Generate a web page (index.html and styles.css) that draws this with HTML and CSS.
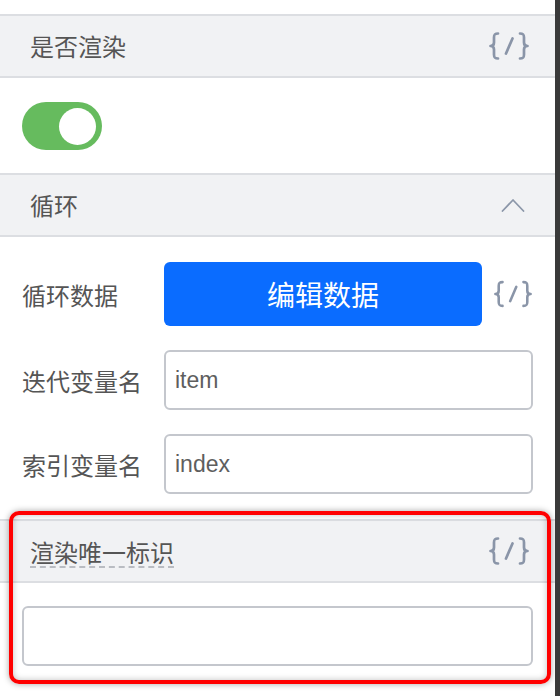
FILE: index.html
```html
<!DOCTYPE html>
<html lang="zh">
<head>
<meta charset="utf-8">
<link rel="stylesheet" href="styles.css">
</head>
<body>
<div class="panel">
  <div class="top-gap"></div>

  <div class="section-head">
    <span class="head-title">是否渲染</span>
    <svg class="code-icon" viewBox="0 0 42 30" width="42" height="30"><path d="M10 2.5C6.5 2.5 6 3.5 6 6.5V11.5C6 13.8 5 15 2.5 15C5 15 6 16.2 6 18.5V23.5C6 26.5 6.5 27.5 10 27.5"/><path d="M24.5 7.5L18 22.5"/><path d="M32 2.5C35.5 2.5 36 3.5 36 6.5V11.5C36 13.8 37 15 39.5 15C37 15 36 16.2 36 18.5V23.5C36 26.5 35.5 27.5 32 27.5"/></svg>
  </div>
  <div class="toggle-body">
    <div class="toggle"><div class="knob"></div></div>
  </div>

  <div class="section-head">
    <span class="head-title">循环</span>
    <svg class="chevron" viewBox="0 0 24 16" width="24" height="16"><path d="M1.5 14L12 3L22.5 14"/></svg>
  </div>
  <div class="fields">
    <div class="field">
      <span class="label">循环数据</span>
      <div class="control with-icon">
        <button class="edit-btn">编辑数据</button>
        <svg class="code-icon" viewBox="0 0 42 30" width="40" height="30"><path d="M10 2.5C6.5 2.5 6 3.5 6 6.5V11.5C6 13.8 5 15 2.5 15C5 15 6 16.2 6 18.5V23.5C6 26.5 6.5 27.5 10 27.5"/><path d="M24.5 7.5L18 22.5"/><path d="M32 2.5C35.5 2.5 36 3.5 36 6.5V11.5C36 13.8 37 15 39.5 15C37 15 36 16.2 36 18.5V23.5C36 26.5 35.5 27.5 32 27.5"/></svg>
      </div>
    </div>
    <div class="field">
      <span class="label">迭代变量名</span>
      <div class="control"><div class="input">item</div></div>
    </div>
    <div class="field">
      <span class="label">索引变量名</span>
      <div class="control"><div class="input">index</div></div>
    </div>
  </div>

  <div class="highlight-wrap">
    <div class="section-head">
      <span class="head-title dashed">渲染唯一标识</span>
      <svg class="code-icon" viewBox="0 0 42 30" width="42" height="30"><path d="M10 2.5C6.5 2.5 6 3.5 6 6.5V11.5C6 13.8 5 15 2.5 15C5 15 6 16.2 6 18.5V23.5C6 26.5 6.5 27.5 10 27.5"/><path d="M24.5 7.5L18 22.5"/><path d="M32 2.5C35.5 2.5 36 3.5 36 6.5V11.5C36 13.8 37 15 39.5 15C37 15 36 16.2 36 18.5V23.5C36 26.5 35.5 27.5 32 27.5"/></svg>
    </div>
    <div class="key-body">
      <div class="input empty"></div>
    </div>
    <div class="highlight"></div>
  </div>
</div>
</body>
</html>
```

FILE: styles.css
```css
html, body {
  margin: 0;
  padding: 0;
  background: #ffffff;
}

body {
  font-family: "Liberation Sans", "Noto Sans CJK SC", sans-serif;
  color: #555555;
}

.panel {
  width: 555px;
  height: 696px;
  border-right: 5px solid #3a3a3a;
  background: #ffffff;
  overflow: hidden;
}

.top-gap {
  height: 14px;
}

.section-head {
  height: 60px;
  box-sizing: content-box;
  border-top: 2px solid #dcdee2;
  border-bottom: 2px solid #dcdee2;
  background: #f1f2f4;
  display: flex;
  align-items: center;
  justify-content: space-between;
  padding: 0 25px 0 30px;
}

.head-title {
  font-size: 24px;
  color: #555555;
  font-family: "Noto Sans CJK SC", sans-serif;
  line-height: 30px;
}

.head-title.dashed {
  border-bottom: 2px dashed #b9bcc2;
  line-height: 28px;
  margin-top: 4px;
}

.code-icon {
  display: block;
  fill: none;
  stroke: #8a95a8;
  stroke-width: 2.7;
  stroke-linecap: round;
  stroke-linejoin: round;
}

.chevron {
  display: block;
  fill: none;
  stroke: #8c97a9;
  stroke-width: 1.8;
  stroke-linecap: round;
  stroke-linejoin: round;
  margin-right: 5px;
}

.toggle-body {
  padding: 24px 22px 23px;
}

.toggle {
  width: 80px;
  height: 48px;
  border-radius: 24px;
  background: #66bb5e;
  display: flex;
  align-items: center;
  justify-content: flex-end;
  padding-right: 6px;
  box-sizing: border-box;
}

.knob {
  width: 37px;
  height: 37px;
  border-radius: 50%;
  background: #ffffff;
}

.fields {
  padding: 25px 22px 25px;
  display: flex;
  flex-direction: column;
  gap: 24px;
}

.field {
  display: flex;
  align-items: center;
}

.label {
  width: 142px;
  flex: none;
  font-size: 24px;
  font-family: "Noto Sans CJK SC", sans-serif;
  color: #555555;
}

.control {
  flex: 1;
  display: flex;
  align-items: center;
}

.with-icon {
  gap: 11px;
}

.edit-btn {
  flex: 1;
  height: 64px;
  border: none;
  border-radius: 6px;
  background: #0a6cff;
  color: #ffffff;
  font-family: "Noto Sans CJK SC", sans-serif;
  font-size: 28px;
  padding: 0;
}

.input {
  flex: 1;
  height: 60px;
  box-sizing: border-box;
  border: 2px solid #c4c7cd;
  border-radius: 6px;
  background: #ffffff;
  display: flex;
  align-items: center;
  padding: 0 9px;
  font-size: 23px;
  color: #5e5e5e;
}

.highlight-wrap {
  position: relative;
}

.key-body {
  padding: 23px 22px;
  display: flex;
}

.highlight {
  position: absolute;
  left: 9px;
  top: -8px;
  width: 542px;
  height: 173px;
  box-sizing: border-box;
  border: 4px solid #ff0000;
  border-radius: 10px;
  box-shadow: 0 0 6px rgba(0, 0, 0, 0.35), inset 0 0 6px rgba(0, 0, 0, 0.25);
  pointer-events: none;
}
```
